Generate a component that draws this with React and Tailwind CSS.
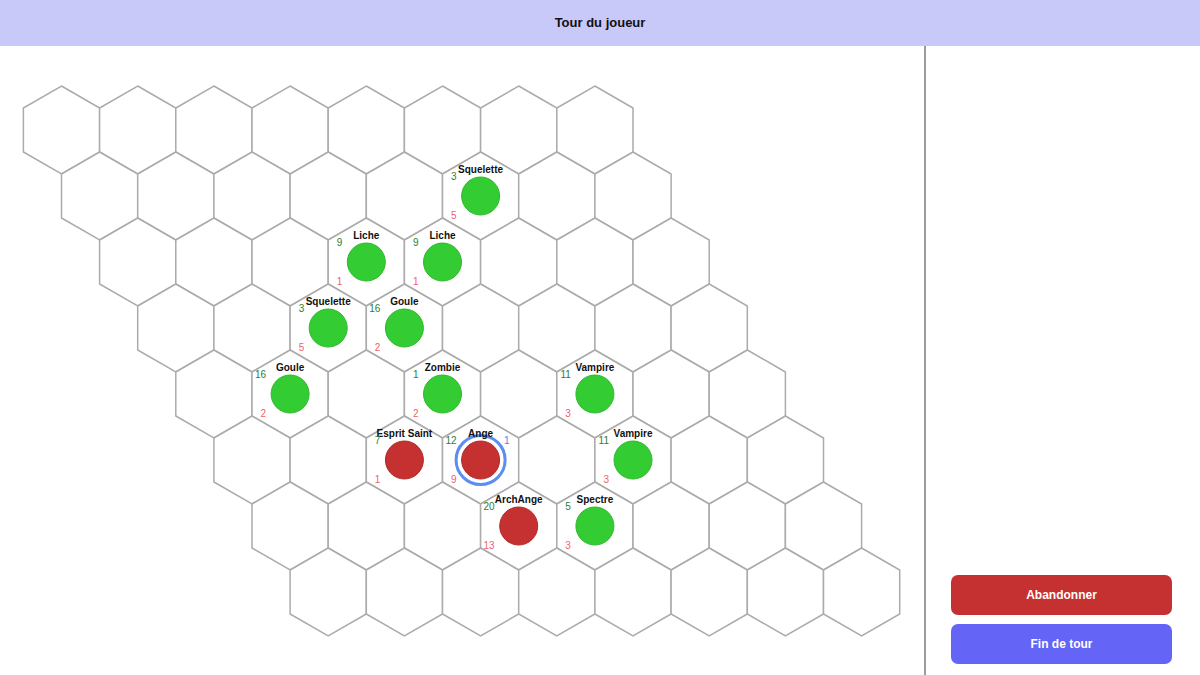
import React from 'react';

const R = 44;
const HALF_W = 38.1;
const ROWS = 8;
const COLS = 8;

// centre of a cell, in page coordinates
const center = (row, col) => ({
  x: 61.5 + col * 76.2 + row * 38.1,
  y: 130 + row * 66,
});

const hexPoints = (cx, cy) =>
  [
    [cx, cy - R],
    [cx + HALF_W, cy - R / 2],
    [cx + HALF_W, cy + R / 2],
    [cx, cy + R],
    [cx - HALF_W, cy + R / 2],
    [cx - HALF_W, cy - R / 2],
  ]
    .map((p) => p.join(','))
    .join(' ');

const units = [
  { row: 1, col: 5, name: 'Squelette', atk: 3, hp: 5, side: 'undead' },
  { row: 2, col: 3, name: 'Liche', atk: 9, hp: 1, side: 'undead' },
  { row: 2, col: 4, name: 'Liche', atk: 9, hp: 1, side: 'undead' },
  { row: 3, col: 2, name: 'Squelette', atk: 3, hp: 5, side: 'undead' },
  { row: 3, col: 3, name: 'Goule', atk: 16, hp: 2, side: 'undead' },
  { row: 4, col: 1, name: 'Goule', atk: 16, hp: 2, side: 'undead' },
  { row: 4, col: 3, name: 'Zombie', atk: 1, hp: 2, side: 'undead' },
  { row: 4, col: 5, name: 'Vampire', atk: 11, hp: 3, side: 'undead' },
  { row: 5, col: 2, name: 'Esprit Saint', atk: 7, hp: 1, side: 'holy' },
  { row: 5, col: 3, name: 'Ange', atk: 12, hp: 9, side: 'holy', selected: true, moves: 1 },
  { row: 5, col: 5, name: 'Vampire', atk: 11, hp: 3, side: 'undead' },
  { row: 6, col: 3, name: 'ArchAnge', atk: 20, hp: 13, side: 'holy' },
  { row: 6, col: 4, name: 'Spectre', atk: 5, hp: 3, side: 'undead' },
];

function Board() {
  const cells = [];
  for (let r = 0; r < ROWS; r++) {
    for (let c = 0; c < COLS; c++) {
      const { x, y } = center(r, c);
      cells.push(
        <polygon
          key={`${r}-${c}`}
          points={hexPoints(x, y)}
          fill="white"
          stroke="#ababab"
          strokeWidth="1.5"
        />
      );
    }
  }

  return (
    <svg width="924" height="629" viewBox="0 46 924 629" style={{ fontFamily: '"Liberation Sans", Arial, sans-serif' }}>
      {cells}
      {units.map((u, i) => {
        const { x, y } = center(u.row, u.col);
        const holy = u.side === 'holy';
        return (
          <g key={i}>
            {u.selected && (
              <circle cx={x} cy={y} r="24.5" fill="none" stroke="#5b8ef0" strokeWidth="3" />
            )}
            <circle
              cx={x}
              cy={y}
              r="19"
              fill={holy ? '#c53030' : '#33cc33'}
              stroke={holy ? '#b52a2a' : '#2fb82f'}
              strokeWidth="1"
            />
            <text x={x} y={y - 23} textAnchor="middle" fontSize="10" fontWeight="bold" fill="#111">
              {u.name}
            </text>
            <text x={x - 24} y={y - 16} textAnchor="end" fontSize="10" fill="#2e7d32">
              {u.atk}
            </text>
            <text x={x - 24} y={y + 23} textAnchor="end" fontSize="10" fill="#f05f6e">
              {u.hp}
            </text>
            {u.moves != null && (
              <text x={x + 23.5} y={y - 16} fontSize="10" fill="#4f86f0">
                {u.moves}
              </text>
            )}
          </g>
        );
      })}
    </svg>
  );
}

export default function App() {
  return (
    <div className="w-[1200px] h-[675px] flex flex-col bg-white overflow-hidden font-['Liberation_Sans',Arial,sans-serif]">
      <header className="h-[46px] shrink-0 bg-[#c8c8f9] flex items-center justify-center text-[13px] font-bold text-[#111]">
        Tour du joueur
      </header>
      <div className="flex flex-1 min-h-0">
        <main className="w-[926px] border-r-2 border-[#9c9c9c]">
          <Board />
        </main>
        <aside className="flex-1 flex flex-col justify-end gap-[9px] pl-[25px] pr-[28px] pb-[11px]">
          <button className="h-[40px] w-full rounded-[7px] bg-[#c53030] text-white text-[12px] font-bold">
            Abandonner
          </button>
          <button className="h-[40px] w-full rounded-[7px] bg-[#6464f6] text-white text-[12px] font-bold">
            Fin de tour
          </button>
        </aside>
      </div>
    </div>
  );
}
